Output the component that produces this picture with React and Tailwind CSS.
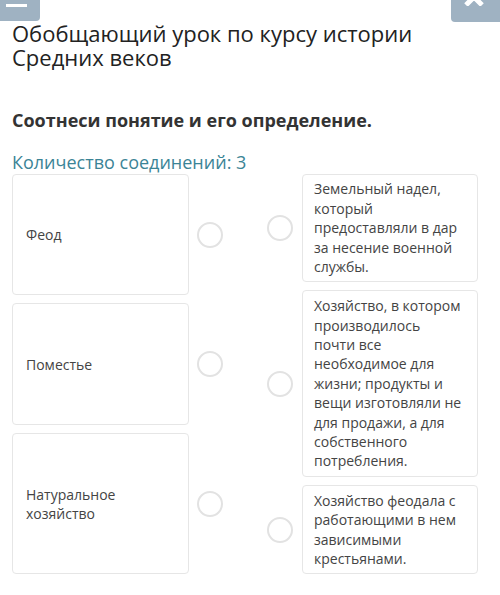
const leftItems = [
  { text: 'Феод', h: 'h-[121px]' },
  { text: 'Поместье', h: 'h-[122px]' },
  { text: 'Натуральное хозяйство', h: 'h-[141px]' },
];

const rightItems = [
  { text: 'Земельный надел, который предоставляли в дар за несение военной службы.', h: 'h-[108px]' },
  { text: 'Хозяйство, в котором производилось почти все необходимое для жизни; продукты и вещи изготовляли не для продажи, а для собственного потребления.', h: 'h-[187px]' },
  { text: 'Хозяйство феодала с работающими в нем зависимыми крестьянами.', h: 'h-[89px]' },
];

function Dot() {
  return <div className="w-[26px] h-[26px] rounded-full border-2 border-[#e2e2e2] bg-white shrink-0" />;
}

export default function App() {
  return (
    <div className="relative w-[500px] h-[595px] bg-white overflow-hidden text-[#333]" style={{ fontFamily: '"Open Sans", "Noto Sans", sans-serif' }}>
      {/* top buttons */}
      <div className="absolute left-0 top-0 w-[40px] h-[21px] bg-[#9fb2c2] rounded-br-[4px]">
        <div className="absolute left-[6px] top-[4px] w-[21px] h-[3px] bg-white" />
      </div>
      <div className="absolute right-0 top-0 w-[49px] h-[22px] bg-[#9fb2c2] rounded-bl-[4px] overflow-hidden">
        <svg className="absolute left-[12px] top-[-12px]" width="22" height="18" viewBox="0 0 22 18">
          <path d="M3 1 L19 17 M19 1 L3 17" stroke="white" strokeWidth="5" />
        </svg>
      </div>

      <div className="px-3 pt-[21px]">
        <h1 className="text-[22px] leading-[24px] text-[#222]">Обобщающий урок по курсу истории Средних веков</h1>
        <p className="mt-[39px] text-[18px] leading-[24px] font-bold text-[#333]">Соотнеси понятие и его определение.</p>
        <p className="mt-[18px] text-[18px] leading-[24px] text-[#3b8496]">Количество соединений: 3</p>

        <div className="flex mt-0">
          <div className="flex flex-col gap-[8px] w-[211px]">
            {leftItems.map((it) => (
              <div key={it.text} className="flex items-center gap-[8px]">
                <div className={`w-[177px] ${it.h} border border-[#e6e6e6] rounded-[4px] flex items-center px-[13px] text-[14px] leading-[19px] text-[#444]`}>
                  {it.text}
                </div>
                <Dot />
              </div>
            ))}
          </div>
          <div className="flex flex-col gap-[8px] ml-[44px]">
            {rightItems.map((it) => (
              <div key={it.text} className="flex items-center gap-[9px]">
                <Dot />
                <div className={`w-[176px] ${it.h} border border-[#e6e6e6] rounded-[4px] flex items-center pl-[11px] pr-[15px] text-[14px] leading-[19.4px] text-[#444]`}>
                  {it.text}
                </div>
              </div>
            ))}
          </div>
        </div>
      </div>
    </div>
  );
}
